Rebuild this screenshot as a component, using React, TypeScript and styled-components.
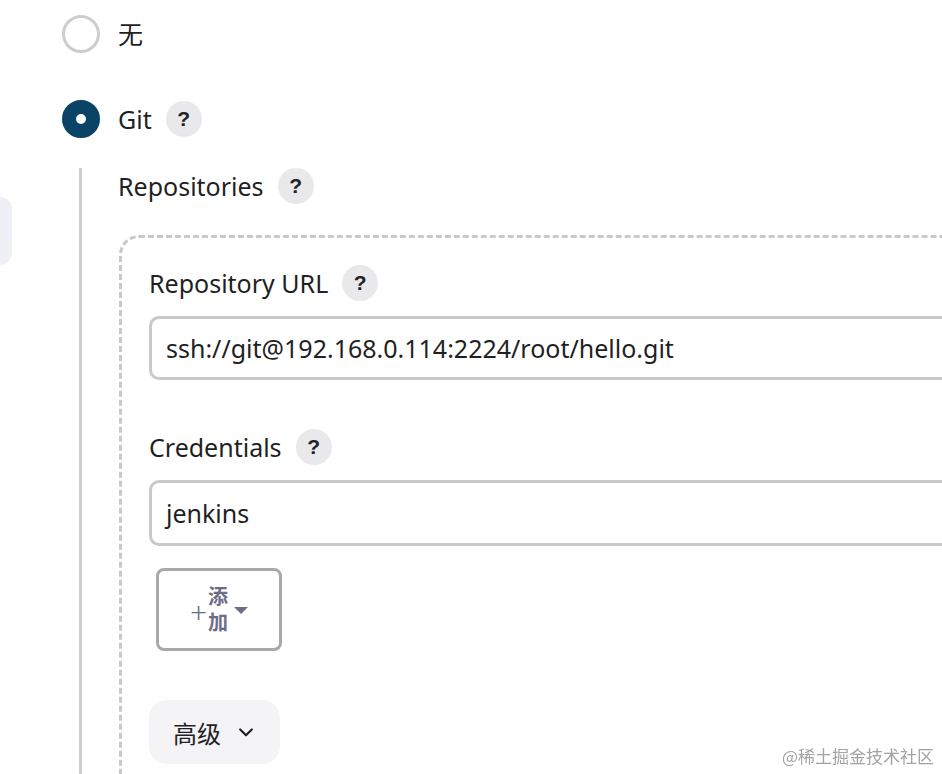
import styled, { createGlobalStyle } from 'styled-components';

const GlobalStyle = createGlobalStyle`
  html, body {
    margin: 0;
    padding: 0;
    background: #ffffff;
    overflow: hidden;
  }
  body {
    font-family: "Noto Sans", "Noto Sans CJK SC", sans-serif;
    color: #1f1f24;
  }
`;

const Page = styled.div`
  display: flex;
  width: 1200px;
  height: 774px;
  overflow: hidden;
`;

const Sidebar = styled.div`
  width: 12px;
  flex-shrink: 0;
  padding-top: 197px;
`;

const SideTab = styled.div`
  width: 32px;
  height: 68px;
  margin-left: -20px;
  border-radius: 12px;
  background: #eff0f5;
`;

const Main = styled.div`
  flex: 1;
  padding: 15px 0 0 50px;
`;

const RadioRow = styled.div<{ $gap?: number }>`
  display: flex;
  align-items: center;
  gap: 18px;
  height: 38px;
  margin-top: ${p => p.$gap ?? 0}px;
`;

const RadioCircle = styled.span<{ $checked?: boolean }>`
  box-sizing: border-box;
  width: 38px;
  height: 38px;
  border-radius: 50%;
  flex-shrink: 0;
  border: ${p => (p.$checked ? '14px solid #0b4367' : '3px solid #cdcdd0')};
  background: #ffffff;
`;

const Label = styled.span`
  font-size: 25px;
  line-height: 36px;
  color: #1f1f24;
`;

const LabelRow = styled.div<{ $gap?: number }>`
  display: flex;
  align-items: center;
  gap: 14px;
  height: 36px;
  margin-top: ${p => p.$gap ?? 0}px;
`;

const Help = styled.span`
  width: 36px;
  height: 36px;
  border-radius: 50%;
  background: #e9e9ec;
  display: flex;
  align-items: center;
  justify-content: center;
  font-family: "Liberation Sans", sans-serif;
  font-weight: 700;
  font-size: 21px;
  color: #222226;
  flex-shrink: 0;
`;

const Nested = styled.div`
  margin: 30px 0 0 17px;
  border-left: 3px solid #cfcfd2;
  padding-left: 36px;
  height: 700px;
`;

const DashedBox = styled.div`
  margin-top: 31px;
  margin-left: 1px;
  border: 3px dashed #c9c9cc;
  border-radius: 20px;
  padding: 27px 0 0 27px;
  width: 1000px;
  height: 700px;
`;

const Field = styled.div<{ $h: number }>`
  box-sizing: border-box;
  margin-top: 15px;
  height: ${p => p.$h}px;
  border: 3px solid #c9c9cc;
  border-radius: 10px;
  display: flex;
  align-items: center;
  padding-left: 14px;
  font-size: 25px;
  color: #1f1f24;
`;

const AddButton = styled.div`
  box-sizing: border-box;
  margin: 22px 0 0 7px;
  width: 126px;
  height: 83px;
  border: 3px solid #a8a8ad;
  border-radius: 8px;
  display: flex;
  align-items: center;
  justify-content: center;
  color: #6c6c86;
`;

const Plus = styled.span`
  font-size: 30px;
  line-height: 30px;
  font-weight: 300;
  margin-right: 1px;
  margin-top: 4px;
`;

const Stack = styled.span`
  display: flex;
  flex-direction: column;
  gap: 2px;
  font-size: 20px;
  line-height: 24px;
  font-weight: 700;
`;

const Caret = styled.span`
  width: 0;
  height: 0;
  border-left: 7px solid transparent;
  border-right: 7px solid transparent;
  border-top: 7px solid #6c6c86;
  margin-left: 6px;
  margin-top: 2px;
`;

const AdvancedButton = styled.div`
  margin-top: 49px;
  width: 131px;
  height: 64px;
  border-radius: 18px;
  background: #f4f4f7;
  display: flex;
  align-items: center;
  box-sizing: border-box;
  padding-left: 24px;
  gap: 15px;
  font-size: 24px;
  color: #1f1f24;
`;

const Watermark = styled.div`
  position: fixed;
  right: 8px;
  bottom: 6px;
  font-size: 17px;
  color: #a3a3a3;
  font-family: "Noto Sans CJK SC", sans-serif;
`;

export default function App() {
  return (
    <>
      <GlobalStyle />
      <Page>
        <Sidebar>
          <SideTab />
        </Sidebar>
        <Main>
          <RadioRow>
            <RadioCircle />
            <Label>无</Label>
          </RadioRow>
          <RadioRow $gap={47}>
            <RadioCircle $checked />
            <LabelRow>
              <Label>Git</Label>
              <Help>?</Help>
            </LabelRow>
          </RadioRow>
          <Nested>
            <LabelRow>
              <Label>Repositories</Label>
              <Help>?</Help>
            </LabelRow>
            <DashedBox>
              <LabelRow>
                <Label>Repository URL</Label>
                <Help>?</Help>
              </LabelRow>
              <Field $h={64}>ssh://git@192.168.0.114:2224/root/hello.git</Field>
              <LabelRow $gap={49}>
                <Label>Credentials</Label>
                <Help>?</Help>
              </LabelRow>
              <Field $h={66}>jenkins</Field>
              <AddButton>
                <Plus>+</Plus>
                <Stack>
                  <span>添</span>
                  <span>加</span>
                </Stack>
                <Caret />
              </AddButton>
              <AdvancedButton>
                <span>高级</span>
                <svg width="20" height="20" viewBox="0 0 24 24" fill="none" stroke="#1f1f24" strokeWidth="2.6" strokeLinecap="round" strokeLinejoin="round">
                  <path d="M5 9l7 7 7-7" />
                </svg>
              </AdvancedButton>
            </DashedBox>
          </Nested>
        </Main>
      </Page>
      <Watermark>@稀土掘金技术社区</Watermark>
    </>
  );
}
